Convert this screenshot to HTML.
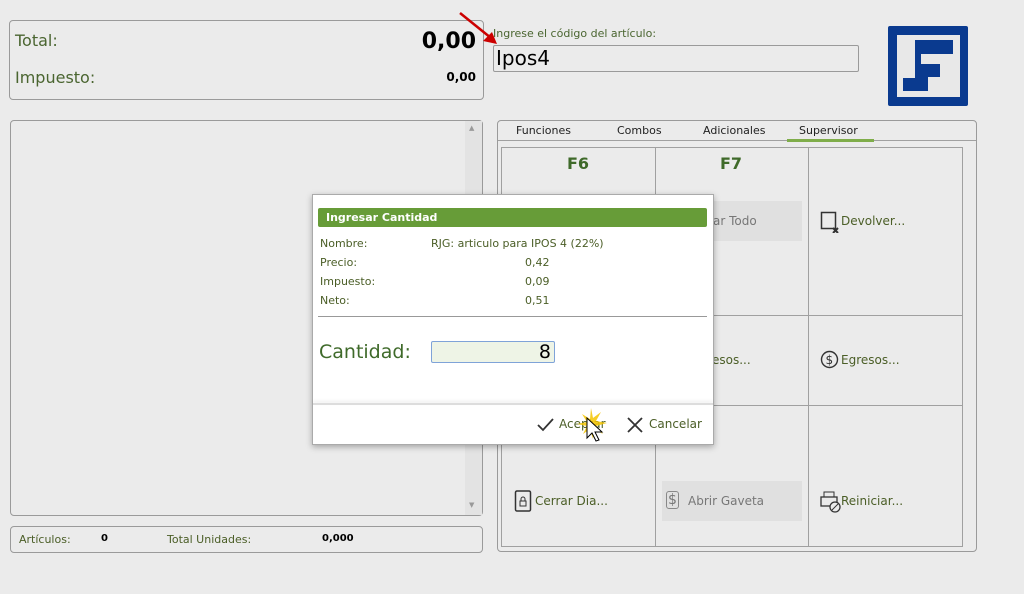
<!DOCTYPE html>
<html><head><meta charset="utf-8"><style>
*{margin:0;padding:0;box-sizing:border-box}
body{width:1024px;height:594px;background:#ebebeb;font-family:"DejaVu Sans","Liberation Sans",sans-serif;position:relative;overflow:hidden;color:#4b5e27}
.a{position:absolute}
.box{position:absolute;border:1px solid #9a9a9a;border-radius:4px}
.t{position:absolute;white-space:nowrap}
</style></head><body>
<div class="box" style="left:9px;top:20px;width:475px;height:80px"></div>
<div class="t" style="left:15px;top:31px;font-size:16px;color:#4a6530">Total:</div>
<div class="t" style="left:15px;top:68px;font-size:16px;color:#4a6530">Impuesto:</div>
<div class="t" style="right:548px;top:29px;font-size:22px;font-weight:bold;color:#000">0,00</div>
<div class="t" style="right:548px;top:70px;font-size:12px;font-weight:bold;color:#000">0,00</div>

<div class="t" style="left:493px;top:27px;font-size:11px;color:#4a6530">Ingrese el código del artículo:</div>
<div class="box" style="left:493px;top:45px;width:366px;height:27px;border-radius:2px"></div>
<div class="t" style="left:496px;top:46px;font-size:20px;color:#000">Ipos4</div>
<svg class="a" style="left:455px;top:10px" width="50" height="40"><line x1="5" y1="3" x2="36" y2="28" stroke="#c00" stroke-width="2.5"/><polygon points="42,34 28,31 37,22" fill="#c00"/></svg>

<svg class="a" style="left:888px;top:26px" width="80" height="80"><rect x="0" y="0" width="80" height="80" rx="2" fill="#0a3a8f"/><rect x="9" y="9" width="63" height="62" fill="#e8e8e8"/><rect x="27" y="14" width="38" height="14" fill="#0a3a8f"/><rect x="27" y="27" width="6" height="13" fill="#0a3a8f"/><rect x="27" y="38" width="25" height="13" fill="#0a3a8f"/><rect x="15" y="52" width="25" height="13" fill="#0a3a8f"/><rect x="27" y="50" width="13" height="3" fill="#0a3a8f"/></svg>

<div class="box" style="left:10px;top:120px;width:473px;height:396px"></div>
<div class="a" style="left:465px;top:121px;width:17px;height:394px;background:#e3e3e3"></div>
<div class="t" style="left:469px;top:124px;font-size:7px;color:#999">▲</div>
<div class="t" style="left:469px;top:501px;font-size:7px;color:#999">▼</div>
<div class="box" style="left:10px;top:526px;width:473px;height:27px"></div>
<div class="t" style="left:19px;top:533px;font-size:11px">Artículos:</div>
<div class="t" style="left:101px;top:533px;font-size:10px;font-weight:bold;color:#000">0</div>
<div class="t" style="left:167px;top:533px;font-size:11px">Total Unidades:</div>
<div class="t" style="left:322px;top:533px;font-size:10px;font-weight:bold;color:#000">0,000</div>

<div class="box" style="left:497px;top:120px;width:480px;height:432px"></div>
<div class="a" style="left:498px;top:140px;width:478px;height:1px;background:#a0a0a0"></div>
<div class="t" style="left:516px;top:124px;font-size:11px;color:#222">Funciones</div>
<div class="t" style="left:617px;top:124px;font-size:11px;color:#222">Combos</div>
<div class="t" style="left:703px;top:124px;font-size:11px;color:#222">Adicionales</div>
<div class="t" style="left:799px;top:124px;font-size:11px;color:#222">Supervisor</div>
<div class="a" style="left:787px;top:139px;width:87px;height:3px;background:#7fad4a"></div>
<div class="a" style="left:501px;top:147px;width:462px;height:400px;border:1px solid #a0a0a0"></div>
<div class="a" style="left:655px;top:147px;width:1px;height:400px;background:#a0a0a0"></div>
<div class="a" style="left:808px;top:147px;width:1px;height:400px;background:#a0a0a0"></div>
<div class="a" style="left:501px;top:315px;width:462px;height:1px;background:#a0a0a0"></div>
<div class="a" style="left:501px;top:405px;width:462px;height:1px;background:#a0a0a0"></div>
<div class="t" style="left:567px;top:154px;font-size:16px;font-weight:bold;color:#3f6a2a">F6</div>
<div class="t" style="left:720px;top:154px;font-size:16px;font-weight:bold;color:#3f6a2a">F7</div>
<div class="a" style="left:662px;top:201px;width:140px;height:40px;background:#e0e0e0"></div>
<div class="t" style="left:713px;top:214px;font-size:12px;color:#777">ar Todo</div>
<div class="t" style="left:712px;top:353px;font-size:12px">esos...</div>
<div class="a" style="left:662px;top:481px;width:140px;height:40px;background:#e0e0e0"></div>
<div class="t" style="left:666px;top:491px;font-size:14px;color:#777;border:1.5px solid #888;border-radius:3px;padding:0 1px;line-height:16px">$</div>
<div class="t" style="left:688px;top:494px;font-size:12px;color:#777">Abrir Gaveta</div>
<svg class="a" style="left:820px;top:211px" width="22" height="22"><rect x="1.5" y="1.5" width="14" height="16" fill="none" stroke="#333" stroke-width="1.5"/><path d="M13 17l5 5M18 17l-5 5" stroke="#333" stroke-width="2"/></svg>
<div class="t" style="left:841px;top:214px;font-size:12px">Devolver...</div>
<svg class="a" style="left:820px;top:350px" width="20" height="20"><circle cx="9.5" cy="9.5" r="8" fill="none" stroke="#333" stroke-width="1.4"/><text x="5.5" y="14" font-size="12" font-family="DejaVu Sans" fill="#333">$</text></svg>
<div class="t" style="left:841px;top:353px;font-size:12px">Egresos...</div>
<svg class="a" style="left:514px;top:489px" width="20" height="24"><rect x="1.5" y="2" width="15" height="20" rx="1.5" fill="none" stroke="#333" stroke-width="1.5"/><rect x="6" y="12" width="6" height="5" fill="none" stroke="#333"/><path d="M7 12v-2a2 2 0 0 1 4 0v2" fill="none" stroke="#333"/></svg>
<div class="t" style="left:535px;top:494px;font-size:12px">Cerrar Dia...</div>
<svg class="a" style="left:820px;top:491px" width="22" height="22"><rect x="4" y="1" width="10" height="5" fill="none" stroke="#333"/><rect x="1" y="6" width="16" height="9" fill="none" stroke="#333" stroke-width="1.3"/><circle cx="15" cy="16" r="5" fill="#ebebeb" stroke="#333" stroke-width="1.3"/><path d="M12 19l6-6" stroke="#333"/></svg>
<div class="t" style="left:841px;top:494px;font-size:12px">Reiniciar...</div>

<div class="a" style="left:312px;top:194px;width:402px;height:251px;background:#fff;border:1px solid #aaa;box-shadow:0 2px 6px rgba(0,0,0,.3)"></div>
<div class="a" style="left:318px;top:208px;width:389px;height:19px;background:#679c38;border-radius:2px"></div>
<div class="t" style="left:326px;top:211px;font-size:11px;font-weight:bold;color:#fff">Ingresar Cantidad</div>
<div class="t" style="left:320px;top:237px;font-size:11px">Nombre:</div>
<div class="t" style="left:431px;top:237px;font-size:11px">RJG: articulo para IPOS 4 (22%)</div>
<div class="t" style="left:320px;top:256px;font-size:11px">Precio:</div>
<div class="t" style="left:525px;top:256px;font-size:11px">0,42</div>
<div class="t" style="left:320px;top:275px;font-size:11px">Impuesto:</div>
<div class="t" style="left:525px;top:275px;font-size:11px">0,09</div>
<div class="t" style="left:320px;top:294px;font-size:11px">Neto:</div>
<div class="t" style="left:525px;top:294px;font-size:11px">0,51</div>
<div class="a" style="left:318px;top:316px;width:389px;height:1px;background:#999"></div>
<div class="t" style="left:319px;top:341px;font-size:19px;color:#3f6a2a">Cantidad:</div>
<div class="a" style="left:431px;top:341px;width:124px;height:22px;background:#eef4e6;border:1px solid #7fa3d8;border-radius:2px"></div>
<div class="t" style="right:473px;top:341px;font-size:19px;color:#000">8</div>
<div class="a" style="left:313px;top:403px;width:400px;height:2px;background:#ddd;box-shadow:0 -2px 3px rgba(0,0,0,.08)"></div>
<svg class="a" style="left:536px;top:416px" width="20" height="18"><path d="M2 9l5 5L17 3" fill="none" stroke="#333" stroke-width="1.8"/></svg>
<div class="t" style="left:559px;top:417px;font-size:12px">Aceptar</div>
<svg class="a" style="left:626px;top:416px" width="18" height="18"><path d="M2 2l14 14M16 2L2 16" stroke="#333" stroke-width="1.8"/></svg>
<div class="t" style="left:649px;top:417px;font-size:12px">Cancelar</div>
<svg class="a" style="left:575px;top:408px" width="40" height="42"><path d="M16 0l2 10 8-6-5 9 11 2-11 3 7 8-9-5-1 10-3-10-7 5 4-8-10-2 10-2-5-8 8 5z" fill="#f5c400" opacity=".85"/><path d="M12 10v20l5-5 4 8 3-1-4-8h7z" fill="#fff" stroke="#000" stroke-width="1"/></svg>
</body></html>
